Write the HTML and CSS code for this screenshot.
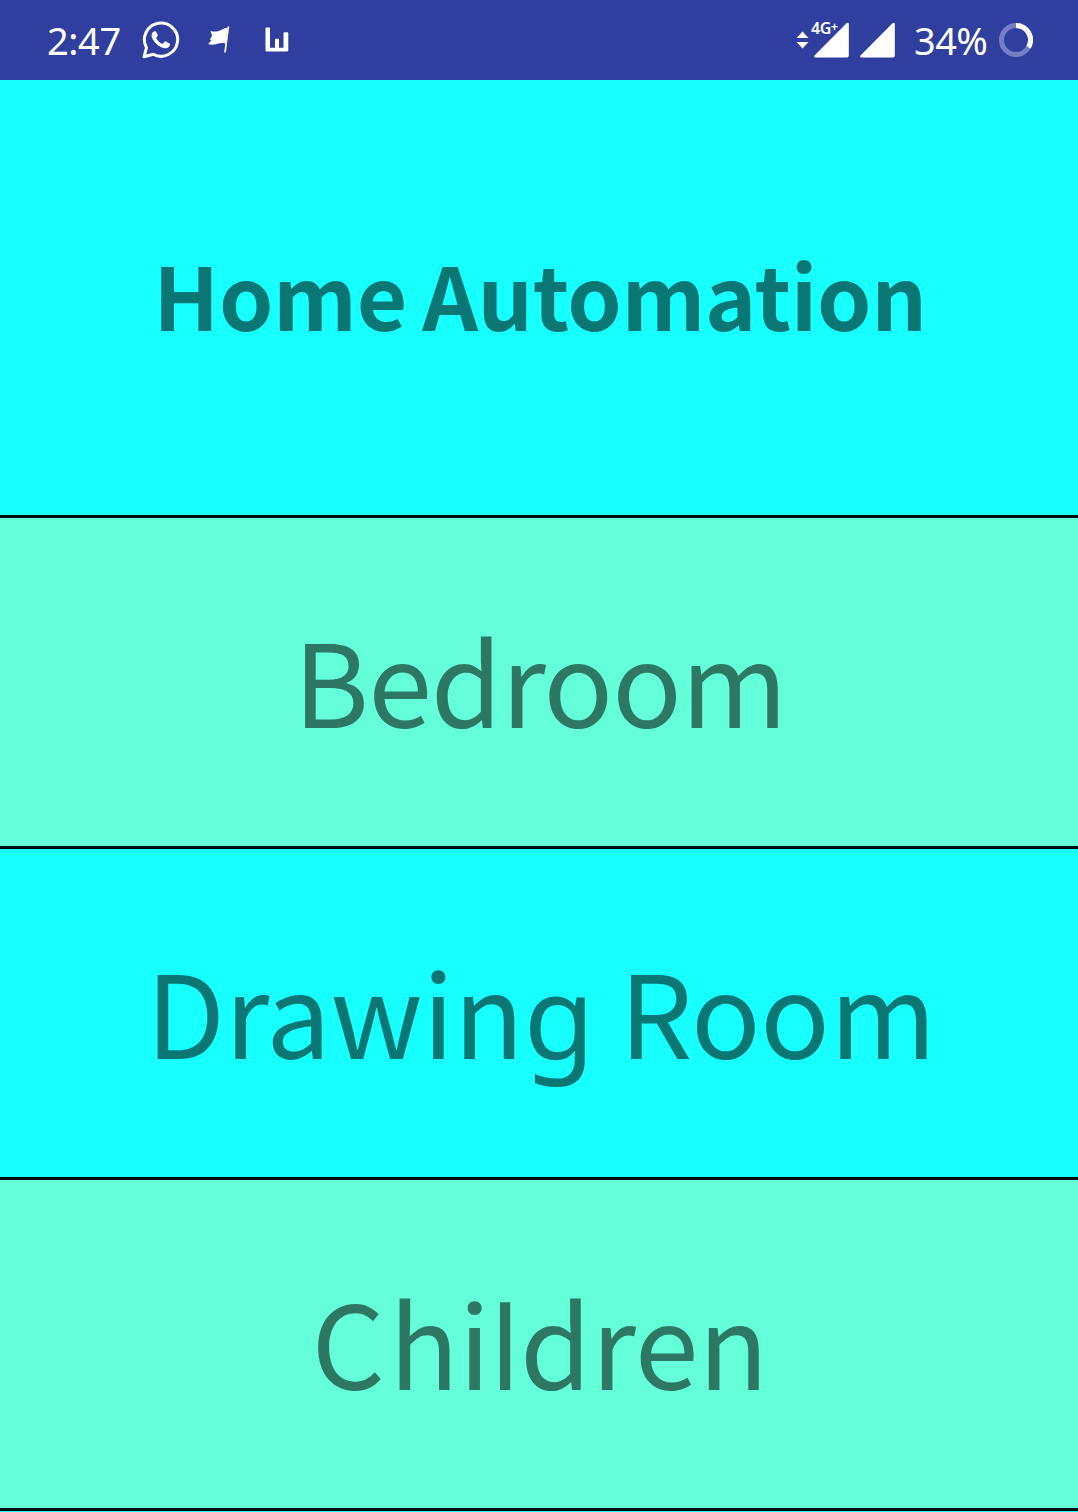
FILE: index.html
```html
<!DOCTYPE html>
<html lang="en">
<head>
<meta charset="utf-8">
<title>Home Automation</title>
<link rel="stylesheet" href="styles.css">
</head>
<body>
<header class="status">
  <span class="clock">2:47</span>
  <svg class="whatsapp" width="38" height="38" viewBox="0 0 38 38"><path d="M2 35.8 4.5 26.7A16.6 16.6 0 1 1 11.2 33.3Z" fill="none" stroke="#fff" stroke-width="3" stroke-linejoin="round"/><path d="M12.6 10.3C10 11 8.8 14.2 10.3 17.4C13 22.5 17.5 26.2 22.5 27.2C25.8 27.6 28.2 25.3 28 22.7L23.4 20.2C22.5 20 21.4 22.8 20.5 22.8C18 22.2 14.9 19 14.2 17C14.2 16 16.1 15 15.8 14L14 10.5Z" fill="#fff"/></svg>
  <svg class="flag" width="22" height="28" viewBox="0 0 22 28"><path d="M2.5 5C8 6.5 11 5 14 3.4Q17 2 19.6 1.8L17.5 17.5C11 15.5 7 20.3 .2 18L3.3 14.5 2 13.5 4.2 9.5Z" fill="#fff"/><path d="M20.4.5 17 26.5" stroke="#fff" stroke-width="1.7"/></svg>
  <svg class="bars" width="24" height="26" viewBox="0 0 24 26"><path d="M.5 1.5Q.5.5 1.5.5H4Q5 .5 5 1.5V20.8H10V12.8Q10 11.8 11 11.8H13Q14 11.8 14 12.8V20.8H18.5V6.3Q18.5 5.3 19.5 5.3H22.3Q23.3 5.3 23.3 6.3V23.3Q23.3 24.6 22 24.6H2Q.5 24.6 .5 23.3Z" fill="#fff"/></svg>
  <svg class="arrows" width="13" height="18" viewBox="0 0 13 18"><path d="M.5 7 6.5.5 12.5 7ZM.5 11H12.5L6.5 17.5Z" fill="#fff"/></svg>
  <div class="signal"><svg width="35" height="36" viewBox="0 0 35 36"><path d="M.5 33.5 32.5 1.2Q34.8-.2 34.8 2V33.5Q34.8 35.5 32.8 35.5H1.5Q-.5 35.5 .5 33.5Z" fill="#fff"/></svg><span class="network">4G<span class="plus">+</span></span></div>
  <svg class="signal-two" width="35" height="36" viewBox="0 0 35 36"><path d="M.5 33.5 32.5 1.2Q34.8-.2 34.8 2V33.5Q34.8 35.5 32.8 35.5H1.5Q-.5 35.5 .5 33.5Z" fill="#fff"/></svg>
  <span class="percent">34%</span>
  <svg class="battery" width="34" height="34" viewBox="0 0 34 34"><circle cx="17" cy="17" r="14.5" fill="none" stroke="#767fc5" stroke-width="5"/><path d="M17 2.5A14.5 14.5 0 0 1 29.5 24.3" fill="none" stroke="#fff" stroke-width="5"/></svg>
</header>
<main>
  <h1 class="row title"><span>Home Automation</span></h1>
  <div class="row mint bedroom"><span>Bedroom</span></div>
  <div class="row drawing"><span>Drawin<span class="plain">g</span> Room</span></div>
  <div class="row mint children"><span><span class="initial">C</span>hi<span class="plain">l</span>dren</span></div>
</main>
</body>
</html>
```
FILE: styles.css
```css
body { margin: 0; background: #18ffff; font-family: "Noto Sans CJK SC", sans-serif; }
.status { box-sizing: border-box; height: 80px; padding: 0 45px 0 47px; display: flex; align-items: center; background: #303f9f; color: #fff; }
.status svg { display: block; flex: none; }
.clock { width: 95px; font: 38px/80px "Noto Sans", sans-serif; letter-spacing: -.4px; }
.flag { margin-left: 28px; }
.bars { margin-left: 35px; }
.arrows { margin-left: auto; }
.signal { position: relative; margin-left: 5px; }
.network { position: absolute; left: -3px; top: -2px; font: 600 16px/16px "Noto Sans", sans-serif; letter-spacing: -.5px; white-space: nowrap; }
.plus { position: relative; top: -3px; font-size: 13px; }
.signal-two { margin-left: 11px; }
.percent { width: 85px; margin-left: 19px; font: 38px/80px "Noto Sans", sans-serif; white-space: nowrap; letter-spacing: -.6px; }
.row { box-sizing: border-box; height: 331px; padding: 0 0 8px 2px; display: flex; align-items: center; justify-content: center; border-bottom: 3px solid #000f0d; background: #18ffff; color: #0b7775; font-size: 115px; font-weight: 400; line-height: 160px; white-space: nowrap; }
.mint { background: #64ffda; color: #2e7764; }
.title { height: 438px; margin: 0; padding-bottom: 10px; font-size: 87px; font-weight: 700; letter-spacing: -.3px; word-spacing: -4px; }
.bedroom { letter-spacing: -1px; }
.drawing { padding-left: 4px; letter-spacing: -.3px; }
.plain { font-family: "Noto Sans", sans-serif; line-height: 1; }
.initial { margin-right: 4px; }
```
